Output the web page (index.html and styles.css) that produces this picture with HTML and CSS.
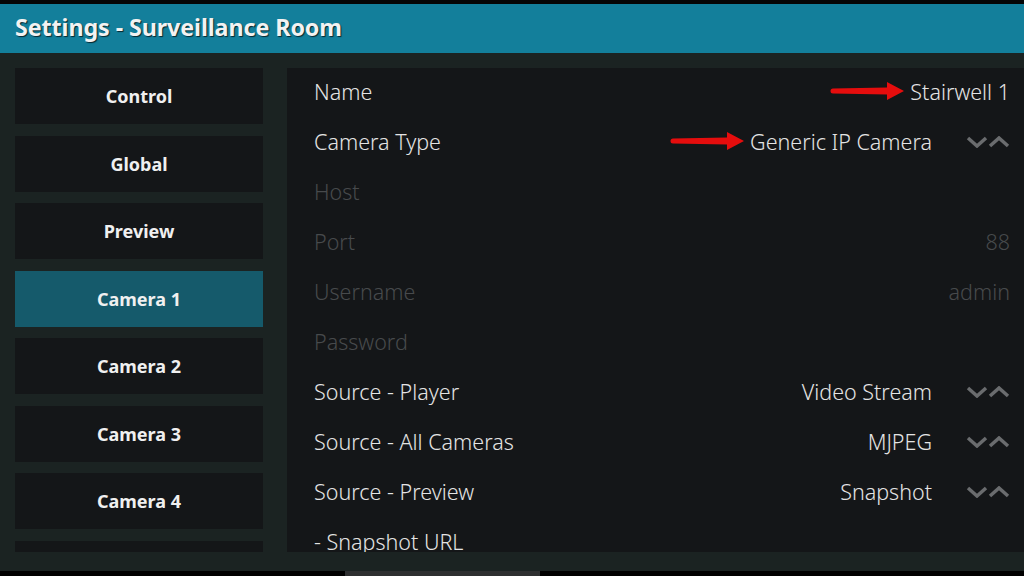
FILE: index.html
```html
<!DOCTYPE html>
<html>
<head>
<meta charset="utf-8">
<link rel="stylesheet" href="styles.css">
</head>
<body>
<div class="screen">
  <div class="topgap"></div>
  <header class="header"><h1 class="title">Settings - Surveillance Room</h1></header>
  <main class="main">
    <nav class="categories">
      <div class="cat">Control</div>
      <div class="cat">Global</div>
      <div class="cat">Preview</div>
      <div class="cat active">Camera 1</div>
      <div class="cat">Camera 2</div>
      <div class="cat">Camera 3</div>
      <div class="cat">Camera 4</div>
      <div class="cat cut"></div>
    </nav>
    <section class="panel">
      <div class="row">
        <span class="label">Name</span>
        <span class="value"><svg class="arrow" width="76" height="22" viewBox="0 0 76 22"><path d="M4 8.5 L58 7.5 L58 2 L75 11 L58 20 L58 14.5 L4 13.5 A2.5 2.5 0 0 1 4 8.5 Z" fill="#e50d0d"/></svg>Stairwell 1</span>
      </div>
      <div class="row spin">
        <span class="label">Camera Type</span>
        <span class="value"><svg class="arrow" width="76" height="22" viewBox="0 0 76 22"><path d="M4 8.5 L58 7.5 L58 2 L75 11 L58 20 L58 14.5 L4 13.5 A2.5 2.5 0 0 1 4 8.5 Z" fill="#e50d0d"/></svg>Generic IP Camera</span>
        <span class="chev"><svg width="44" height="12" viewBox="0 0 44 12"><path d="M2 2 L11 10 L20 2" /><path d="M24 10 L33 2 L42 10" /></svg></span>
      </div>
      <div class="row disabled"><span class="label">Host</span><span class="value"></span></div>
      <div class="row disabled"><span class="label">Port</span><span class="value">88</span></div>
      <div class="row disabled"><span class="label">Username</span><span class="value">admin</span></div>
      <div class="row disabled"><span class="label">Password</span><span class="value"></span></div>
      <div class="row spin">
        <span class="label">Source - Player</span>
        <span class="value">Video Stream</span>
        <span class="chev"><svg width="44" height="12" viewBox="0 0 44 12"><path d="M2 2 L11 10 L20 2" /><path d="M24 10 L33 2 L42 10" /></svg></span>
      </div>
      <div class="row spin">
        <span class="label">Source - All Cameras</span>
        <span class="value">MJPEG</span>
        <span class="chev"><svg width="44" height="12" viewBox="0 0 44 12"><path d="M2 2 L11 10 L20 2" /><path d="M24 10 L33 2 L42 10" /></svg></span>
      </div>
      <div class="row spin">
        <span class="label">Source - Preview</span>
        <span class="value">Snapshot</span>
        <span class="chev"><svg width="44" height="12" viewBox="0 0 44 12"><path d="M2 2 L11 10 L20 2" /><path d="M24 10 L33 2 L42 10" /></svg></span>
      </div>
      <div class="row"><span class="label">- Snapshot URL</span><span class="value"></span></div>
    </section>
  </main>
  <footer class="footer"><div class="footer-block"></div></footer>
</div>
</body>
</html>
```

FILE: styles.css
```css
* { box-sizing: border-box; }
html, body { margin: 0; padding: 0; }
body {
  background: #000;
  font-family: "Noto Sans", "Open Sans", sans-serif;
  color: #e6e6e6;
}
.screen {
  width: 1024px;
  height: 576px;
  display: flex;
  flex-direction: column;
  overflow: hidden;
}
.topgap { height: 4px; background: #050606; flex: none; }
.header {
  height: 49px;
  flex: none;
  background: #137f9b;
  display: flex;
  align-items: center;
  padding-left: 15px;
  padding-bottom: 3px;
}
.title {
  margin: 0;
  font-size: 23.3px;
  font-weight: 700;
  color: #f2f2f2;
  text-shadow: 1px 1px 1px rgba(0,0,0,0.7);
  letter-spacing: -0.1px;
}
.main {
  flex: none;
  height: 518px;
  background: #1b2322;
  display: flex;
  gap: 24px;
  padding: 15px 0 19px 15px;
}
.categories {
  width: 248px;
  flex: none;
  display: flex;
  flex-direction: column;
  gap: 11.5px;
  overflow: hidden;
}
.cat {
  flex: none;
  height: 56px;
  background: #141618;
  display: flex;
  align-items: center;
  justify-content: center;
  font-size: 18px;
  font-weight: 700;
  color: #f0f0f0;
}
.cat.active { background: #155a6b; }
.panel {
  flex: 1;
  background: #141618;
  overflow: hidden;
  padding-left: 27px;
  padding-right: 14px;
}
.row {
  height: 50px;
  flex: none;
  display: flex;
  align-items: center;
  padding-bottom: 4px;
  font-size: 21.5px;
  font-weight: 300;
  color: #e4e4e4;
}
.label { flex: 1; }
.value { display: flex; align-items: center; gap: 5px; }
.row.disabled { color: #474a4c; }
.chev { margin-left: 34px; display: flex; align-items: center; padding-top: 2px; }
.chev svg path {
  fill: none;
  stroke: #6a6c6e;
  stroke-width: 3.5;
  stroke-linejoin: miter;
}
.arrow { display: block; }
.footer {
  flex: 1;
  background: #000;
  padding-left: 345px;
}
.footer-block { width: 195px; height: 100%; background: #2e2f30; }
```
